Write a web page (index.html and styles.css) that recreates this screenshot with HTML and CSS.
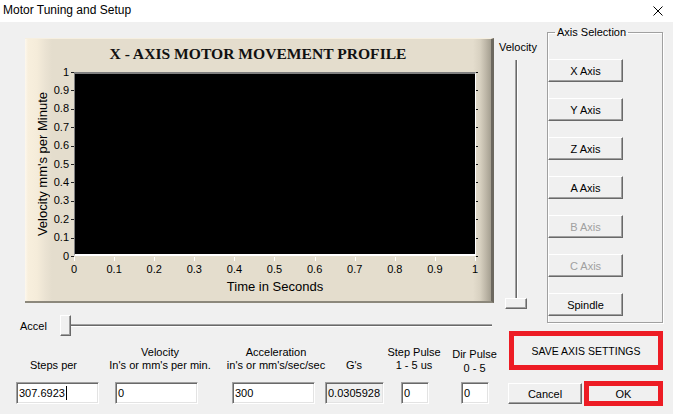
FILE: index.html
```html
<!DOCTYPE html>
<html>
<head>
<meta charset="utf-8">
<link rel="stylesheet" href="styles.css">
</head>
<body>
<div class="titlebar">
  <span class="title">Motor Tuning and Setup</span>
  <svg class="close" width="10" height="10" viewBox="0 0 10 10"><path d="M0.5 0.5L9.5 9.5M9.5 0.5L0.5 9.5" stroke="#000" stroke-width="1" fill="none"/></svg>
</div>
<div class="content">
  <div class="left">
    <div class="chart">
      <div class="chart-title">X - AXIS MOTOR MOVEMENT PROFILE</div>
      <div class="chart-body">
        <div class="ytitle"><span>Velocity mm's per Minute</span></div>
        <div class="yticks">
          <span>1</span><span>0.9</span><span>0.8</span><span>0.7</span><span>0.6</span><span>0.5</span><span>0.4</span><span>0.3</span><span>0.2</span><span>0.1</span><span>0</span>
        </div>
        <div class="lticks"></div>
        <div class="plot-col">
          <div class="plot-row">
            <div class="plot"></div>
            <div class="rticks"></div>
          </div>
          <div class="bticks"></div>
          <div class="xticks">
            <span>0</span><span>0.1</span><span>0.2</span><span>0.3</span><span>0.4</span><span>0.5</span><span>0.6</span><span>0.7</span><span>0.8</span><span>0.9</span><span>1</span>
          </div>
          <div class="xtitle">Time in Seconds</div>
        </div>
      </div>
    </div>
    <div class="accel">
      <span class="accel-label">Accel</span>
      <div class="hthumb"></div>
      <div class="htrack"></div>
    </div>
    <div class="field-labels">
      <div class="flabel w1"><span>Steps per</span></div>
      <div class="flabel w2"><span>Velocity</span><span>In's or mm's per min.</span></div>
      <div class="flabel w3"><span>Acceleration</span><span>in's or mm's/sec/sec</span></div>
      <div class="flabel w4"><span>G's</span></div>
      <div class="flabel w5"><span>Step Pulse</span><span>1 - 5 us</span></div>
      <div class="flabel w6 low"><span>Dir Pulse</span><span>0 - 5</span></div>
    </div>
    <div class="field-inputs">
      <div class="tbox i1">307.6923<span class="caret"></span></div>
      <div class="tbox i2">0</div>
      <div class="tbox i3">300</div>
      <div class="tbox i4 readonly">0.0305928</div>
      <div class="tbox i5">0</div>
      <div class="tbox i6">0</div>
    </div>
  </div>
  <div class="right">
    <div class="top-right">
      <div class="vel">
        <span class="vel-label">Velocity</span>
        <div class="vslider">
          <div class="vtrack"></div>
          <div class="vthumb"></div>
        </div>
      </div>
      <fieldset class="group">
        <legend>Axis Selection</legend>
        <div class="btn axis">X Axis</div>
        <div class="btn axis">Y Axis</div>
        <div class="btn axis">Z Axis</div>
        <div class="btn axis">A Axis</div>
        <div class="btn axis disabled">B Axis</div>
        <div class="btn axis disabled">C Axis</div>
        <div class="btn axis">Spindle</div>
      </fieldset>
    </div>
    <div class="save">SAVE AXIS SETTINGS</div>
    <div class="actions">
      <div class="btn cancel">Cancel</div>
      <div class="ok">OK</div>
    </div>
  </div>
</div>
</body>
</html>
```
FILE: styles.css
```css
* { box-sizing: border-box; }
html, body { margin: 0; padding: 0; }
body {
  width: 673px;
  height: 414px;
  overflow: hidden;
  background: #f0f0f0;
  font-family: "Liberation Sans", Arial, sans-serif;
  font-size: 11px;
  color: #000;
}

/* title bar */
.titlebar {
  height: 22px;
  background: #fff;
  display: flex;
  align-items: center;
  justify-content: space-between;
  padding: 0 10px 2px 3px;
}
.title { font-size: 12px; }
.close { display: block; margin-top: 2px; }

.content { display: flex; }
.left { width: 496px; }
.right { width: 177px; }

/* chart */
.chart {
  margin: 16px 0 0 25px;
  width: 469px;
  height: 265px;
  border-top: 1px solid #f6efe0;
  border-right: 3px solid #6c685f;
  border-bottom: 2px solid #8c887c;
  background: linear-gradient(to right, #fdf8ee 0px, #f8efdd 3px, #f5ecda 12px, #ebe3d3 20px, #e4ddcd 27px, #e4ddcd 448px, #d8d1c1 455px, #bdb6a7 461px, #a49e90 466px);
}
.chart-title {
  height: 33px;
  line-height: 30px;
  text-align: center;
  font-family: "Liberation Serif", "Times New Roman", serif;
  font-weight: bold;
  font-size: 15.6px;
  color: #111;
}
.chart-body { display: flex; }
.ytitle {
  width: 34px;
  height: 184px;
  display: flex;
  justify-content: center;
  align-items: center;
}
.ytitle span {
  writing-mode: vertical-rl;
  transform: rotate(180deg);
  font-size: 13px;
  white-space: nowrap;
}
.yticks {
  width: 10px;
  margin-top: -9px;
  display: flex;
  flex-direction: column;
}
.yticks span {
  height: 18.4px;
  display: flex;
  align-items: center;
  justify-content: flex-end;
  white-space: nowrap;
  line-height: 1;
}
.lticks {
  width: 3px;
  margin-left: 2px;
  height: 185px;
  background: repeating-linear-gradient(to bottom, #222 0 1px, transparent 1px 18.4px);
}
.plot-col { width: 404px; }
.plot-row { display: flex; }
.plot {
  width: 402px;
  height: 184px;
  background: #000;
  border-top: 2px solid #808080;
  border-left: 1px solid #808080;
  border-bottom: 2px solid #fff;
  border-right: 1px solid #fff;
}
.rticks {
  width: 2px;
  height: 185px;
  background: repeating-linear-gradient(to bottom, #111 0 1px, transparent 1px 18.4px);
}
.bticks {
  width: 402px;
  height: 4px;
  background: repeating-linear-gradient(to right, #fff 0 1px, transparent 1px 40.1px);
}
.xticks {
  display: flex;
  margin-left: -20px;
  height: 16px;
}
.xticks span {
  width: 40.1px;
  flex: none;
  text-align: center;
  line-height: 16px;
}
.xtitle {
  width: 402px;
  text-align: center;
  font-size: 13px;
  line-height: 20px;
}

/* accel slider */
.accel {
  display: flex;
  align-items: center;
  height: 23px;
  margin-top: 11px;
  padding-left: 20px;
}
.accel-label { width: 40px; }
.hthumb {
  width: 11px;
  height: 21px;
  background: #f0f0f0;
  border-top: 1px solid #fff;
  border-left: 1px solid #fff;
  border-right: 1px solid #696969;
  border-bottom: 1px solid #696969;
  box-shadow: inset -1px -1px 0 #a0a0a0;
}
.htrack {
  width: 421px;
  height: 3px;
  border-top: 1px solid #a0a0a0;
  border-bottom: 1px solid #fff;
  background: #696969;
}

/* fields */
.field-labels {
  display: flex;
  margin-top: 9px;
  height: 26px;
}
.flabel {
  display: flex;
  flex-direction: column;
  justify-content: flex-end;
  align-items: center;
  height: 26px;
  line-height: 13px;
  white-space: nowrap;
}
.flabel.low { padding-top: 1px; justify-content: flex-start; }
.flabel.low span { line-height: 14px; }
.w1 { width: 107px; }
.w2 { width: 106px; }
.w3 { width: 126px; }
.w4 { width: 30px; }
.w5 { width: 90px; }
.w6 { width: 31px; }

.field-inputs {
  display: flex;
  margin-top: 10px;
}
.tbox {
  height: 22px;
  background: #fff;
  border: 1px solid;
  border-color: #a0a0a0 #fff #fff #a0a0a0;
  box-shadow: inset 1px 1px 0 #696969, inset -1px -1px 0 #e3e3e3;
  padding-left: 2px;
  line-height: 20px;
  white-space: nowrap;
  overflow: hidden;
  display: flex;
  align-items: center;
}
.tbox.readonly { background: #f0f0f0; }
.caret {
  display: inline-block;
  width: 1px;
  height: 14px;
  background: #000;
  margin-left: 1px;
}
.i1 { margin-left: 16px; width: 83px; }
.i2 { margin-left: 16px; width: 83px; }
.i3 { margin-left: 34px; width: 83px; }
.i4 { margin-left: 10px; width: 59px; }
.i5 { margin-left: 17px; width: 28px; }
.i6 { margin-left: 32px; width: 28px; }

/* right side */
.top-right { display: flex; }
.vel {
  margin: 18px 0 0 3px;
  width: 31px;
  display: flex;
  flex-direction: column;
}
.vel-label { line-height: 14px; white-space: nowrap; }
.vslider {
  margin: 6px 0 0 6px;
  width: 22px;
  display: flex;
  flex-direction: column;
  align-items: center;
}
.vtrack {
  width: 3px;
  height: 238px;
  border-left: 1px solid #a0a0a0;
  border-right: 1px solid #fff;
  background: #696969;
}
.vthumb {
  width: 22px;
  height: 11px;
  background: #f0f0f0;
  border-top: 1px solid #fff;
  border-left: 1px solid #fff;
  border-right: 1px solid #696969;
  border-bottom: 1px solid #696969;
  box-shadow: inset -1px -1px 0 #a0a0a0;
}

.group {
  margin: 3px 0 0 17px;
  width: 116px;
  height: 298px;
  padding: 20px 0 6px 0;
  border: 1px solid #a0a0a0;
  box-shadow: inset 1px 1px 0 #fff, 1px 1px 0 #fff;
}
.group legend {
  margin-left: 7px;
  padding: 0 2px;
  line-height: 14px;
}
.btn {
  background: #f0f0f0;
  border-top: 1px solid #fff;
  border-left: 1px solid #fff;
  border-right: 1px solid #696969;
  border-bottom: 1px solid #696969;
  box-shadow: inset -1px -1px 0 #a0a0a0;
  display: flex;
  align-items: center;
  justify-content: center;
  white-space: nowrap;
}
.axis {
  width: 75px;
  height: 23px;
  margin-bottom: 16px;
}
.axis:last-child { margin-bottom: 0; }
.disabled { color: #a0a0a0; }

.save {
  margin: 8px 0 0 13px;
  width: 154px;
  height: 39px;
  border: 5px solid #ed1c24;
  display: flex;
  align-items: center;
  justify-content: center;
  font-size: 10.5px;
  white-space: nowrap;
}
.actions {
  display: flex;
  align-items: flex-start;
  margin: 11px 0 0 12px;
}
.cancel {
  margin-top: 2px;
  width: 74px;
  height: 21px;
}
.ok {
  margin-left: 2px;
  width: 79px;
  height: 25px;
  border: 5px solid #ed1c24;
  display: flex;
  align-items: center;
  justify-content: center;
}
```
